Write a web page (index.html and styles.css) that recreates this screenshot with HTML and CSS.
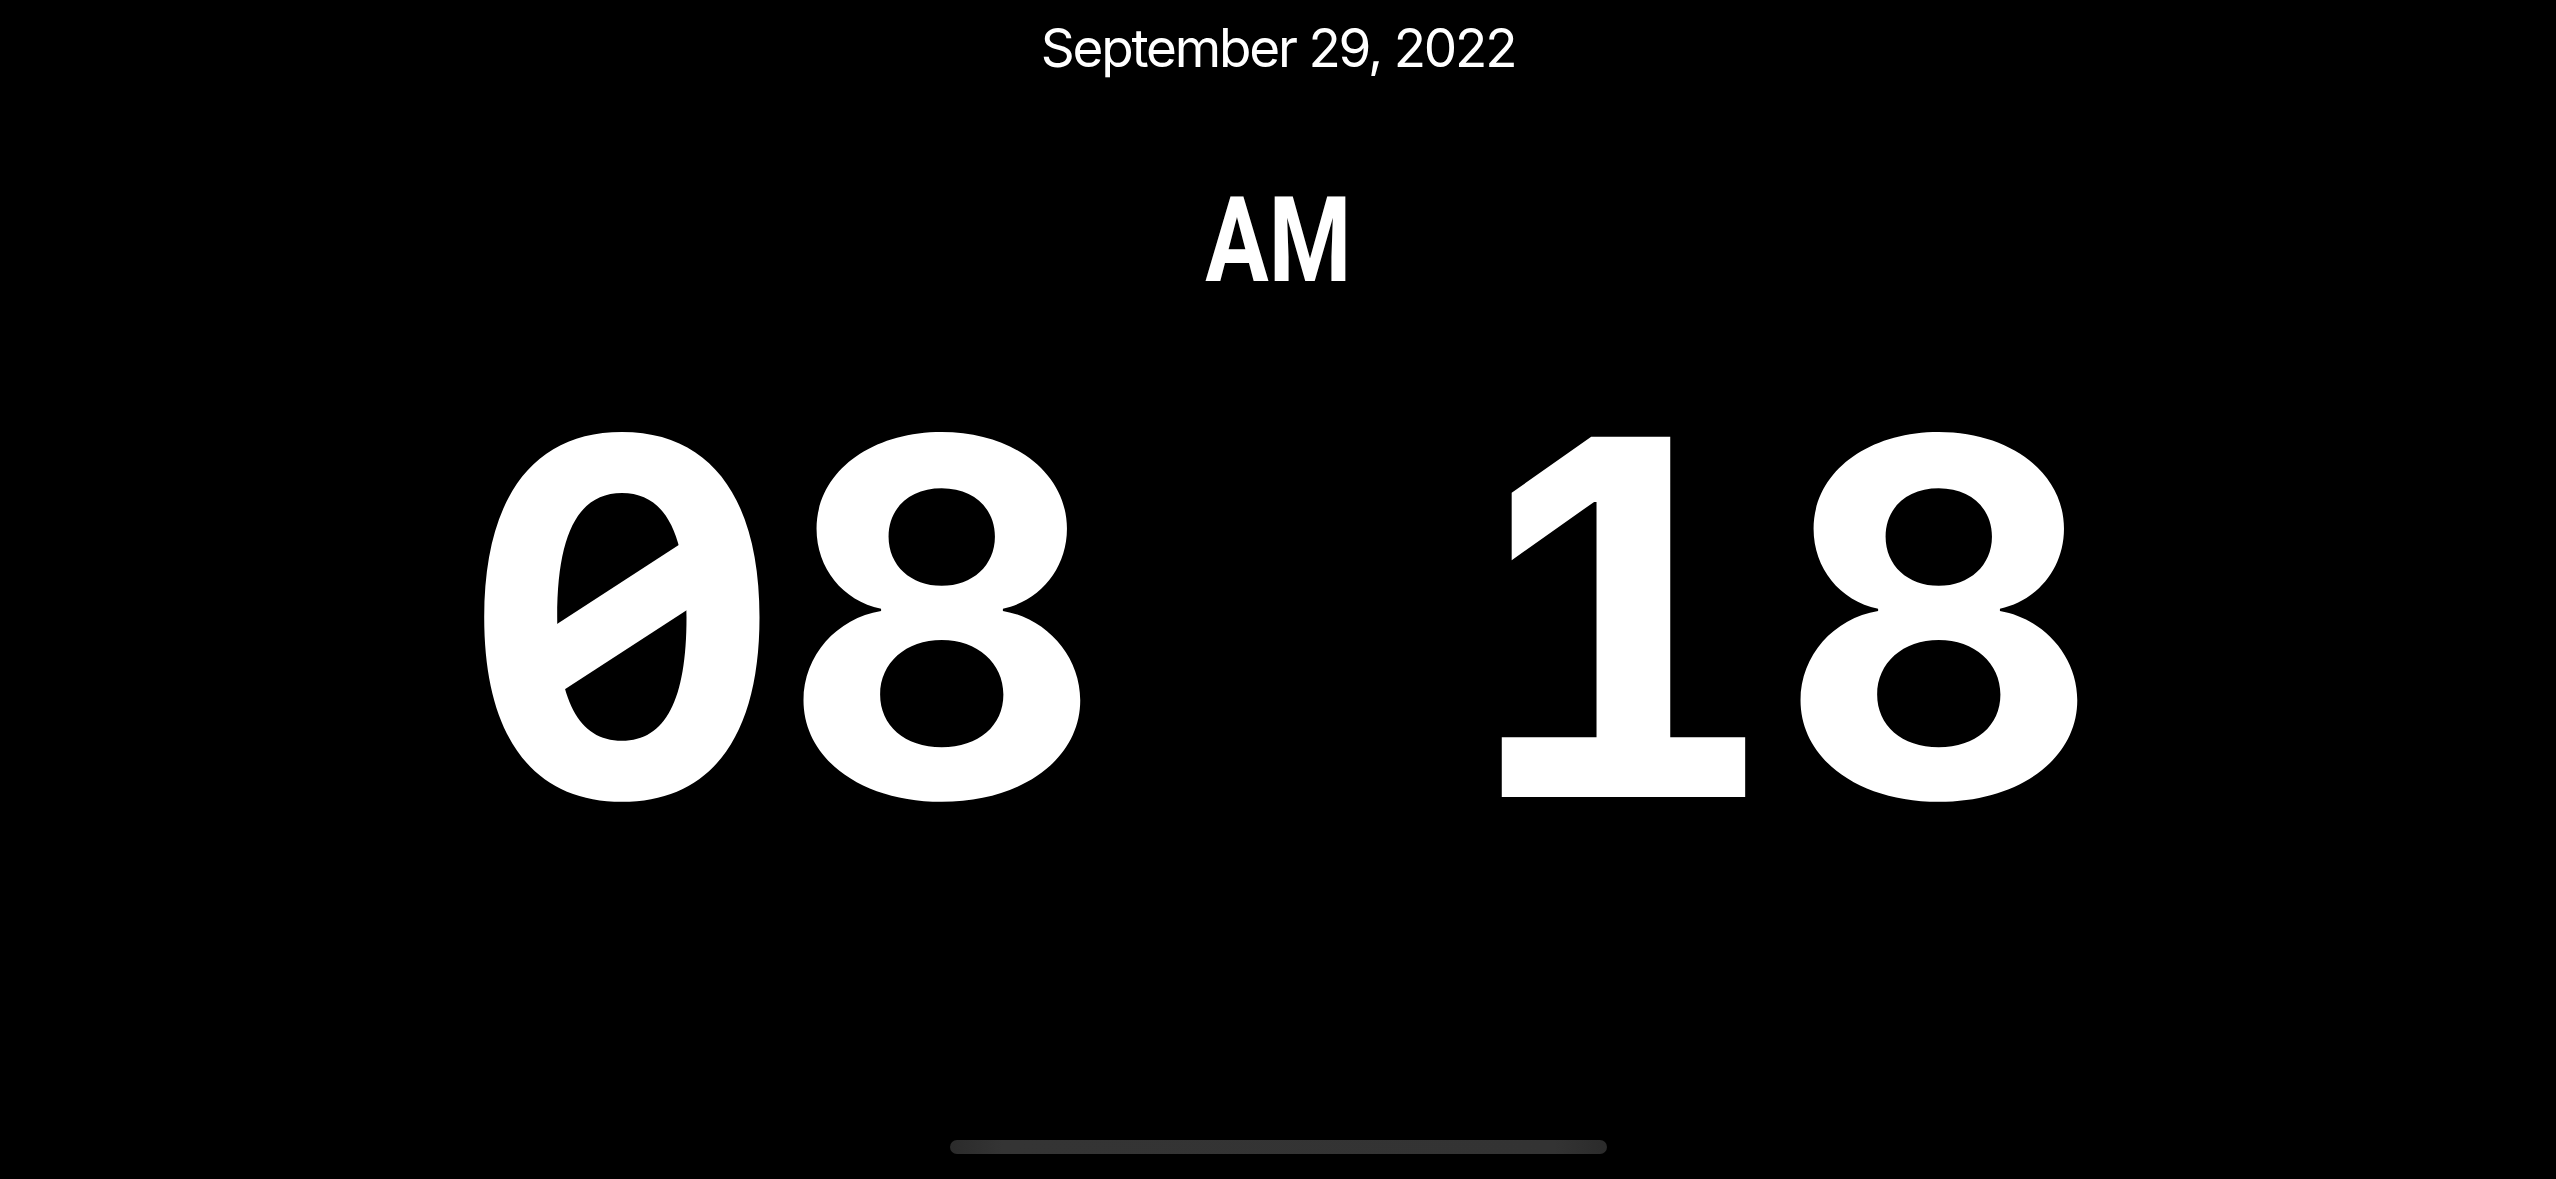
FILE: index.html
```html
<!DOCTYPE html>
<html lang="en">
<head>
<meta charset="utf-8">
<title>Clock</title>
<link rel="stylesheet" href="styles.css">
</head>
<body>
<main class="screen">
  <div class="date">September 29, 2022</div>
  <div class="meridiem">AM</div>
  <div class="time">
    <span class="group"><span class="digit zero">0</span><span class="digit">8</span></span>
    <span class="group"><span class="digit">1</span><span class="digit">8</span></span>
  </div>
  <div class="home-indicator"></div>
</main>
</body>
</html>
```
FILE: styles.css
```css
html, body {
  margin: 0;
  padding: 0;
  background: #000;
}
.screen {
  height: 1179px;
  width: 2556px;
  display: flex;
  flex-direction: column;
  align-items: center;
  color: #fff;
  padding-top: 22px;
  padding-bottom: 25px;
  box-sizing: border-box;
  overflow: hidden;
}
.date {
  font-family: Inter, "Noto Sans", sans-serif;
  font-weight: 400;
  font-size: 53px;
  line-height: 53px;
  height: 53px;
  letter-spacing: -2.2px;
}
.meridiem {
  margin-top: 107px;
  font-family: Roboto, "Liberation Sans", sans-serif;
  font-weight: 700;
  font-size: 118px;
  line-height: 118px;
  height: 118px;
  transform: scaleX(0.8);
}
.time {
  margin-top: 69px;
  padding-left: 5px;
  display: flex;
  gap: 357px;
  font-family: Inter, "Noto Sans", sans-serif;
  font-weight: 700;
  font-size: 495px;
  line-height: 495px;
  height: 495px;
  font-feature-settings: "tnum" 1;
}
.group {
  display: flex;
}
.digit {
  display: block;
  position: relative;
  height: 1em;
}
.zero::after {
  content: "";
  position: absolute;
  left: 50%;
  top: 50%;
  width: 214px;
  height: 59px;
  background: #fff;
  transform: translate(-50%, -50%) rotate(-33deg);
}
.home-indicator {
  margin-top: auto;
  width: 657px;
  height: 14px;
  border-radius: 7px;
  background: linear-gradient(90deg, #2b2b2b 0%, #343434 8%, #333 92%, #2b2b2b 100%);
}
```
